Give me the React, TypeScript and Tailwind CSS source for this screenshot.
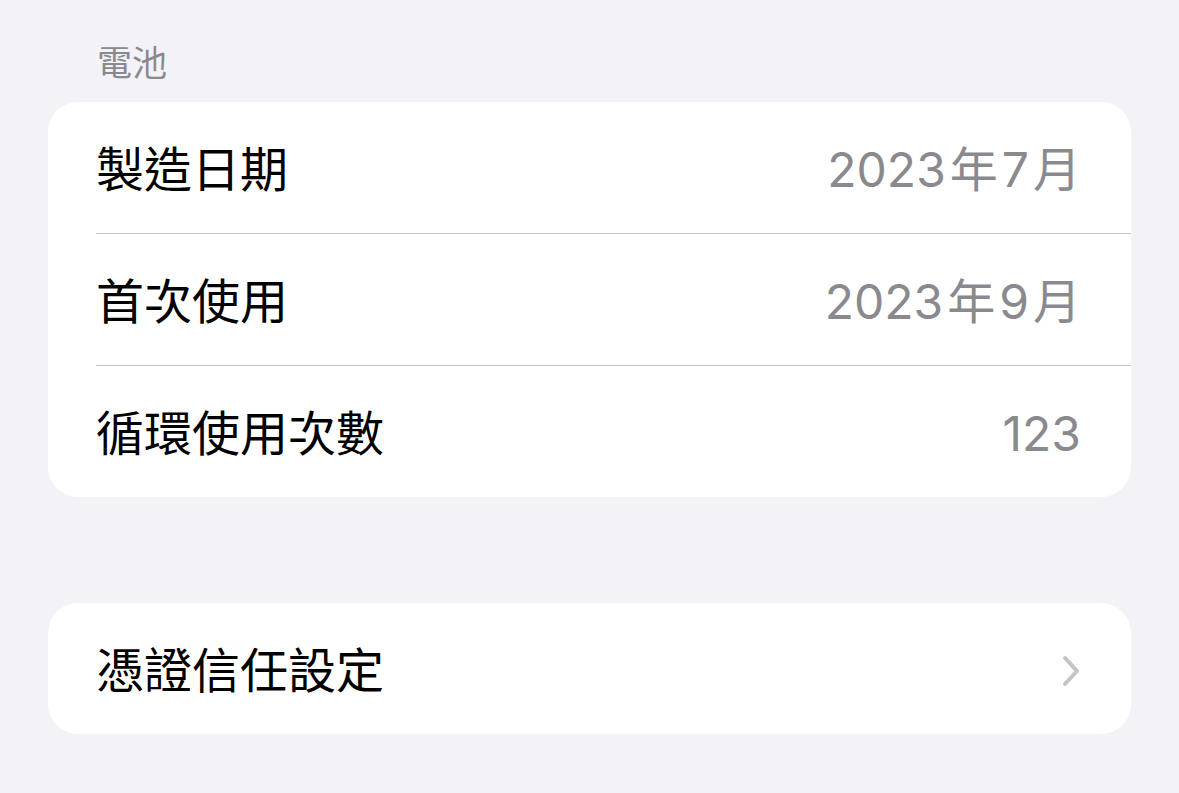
import React from "react";

const font = "font-['Inter','Noto_Sans_CJK_TC',sans-serif]";

function Chevron() {
  return (
    <svg width="20" height="34" viewBox="0 0 20 34" fill="none">
      <path d="M4 4 L16 17 L4 30" stroke="#c4c4c7" strokeWidth="4" strokeLinecap="round" strokeLinejoin="round" />
    </svg>
  );
}

function Value({ parts }: { parts: string[] }) {
  return (
    <span className="flex items-center text-[#8a8a8e]">
      {parts.map((p, i) => (
        <span key={i} className={i > 0 ? "ml-[4px]" : ""}>
          {p}
        </span>
      ))}
    </span>
  );
}

function Row({ label, children, last }: { label: string; children?: React.ReactNode; last?: boolean }) {
  return (
    <div className="pl-[48px]">
      <div
        className={`flex items-center justify-between pr-[50px] pt-[4px] ${
          last ? "h-[131px]" : "h-[132px] border-b border-[#c6c6c8]"
        }`}
      >
        <span className="text-black">{label}</span>
        {children}
      </div>
    </div>
  );
}

export default function App() {
  return (
    <div className={`min-h-[793px] w-[1179px] bg-[#f2f2f7] ${font}`}>
      <div className="px-[48px] pt-[42px]">
        <div className="pl-[49px] text-[35px] leading-[42px] text-[#8a8a8e]">電池</div>
        <div className="mt-[18px] overflow-hidden rounded-[30px] bg-white text-[48px]">
          <Row label="製造日期">
            <Value parts={["2023", "年", "7", "月"]} />
          </Row>
          <Row label="首次使用">
            <Value parts={["2023", "年", "9", "月"]} />
          </Row>
          <Row label="循環使用次數" last>
            <span className="text-[#8a8a8e]">123</span>
          </Row>
        </div>
        <div className="mt-[106px] overflow-hidden rounded-[30px] bg-white text-[48px]">
          <div className="flex h-[131px] items-center justify-between pl-[48px] pr-[50px] pt-[4px]">
            <span className="text-black">憑證信任設定</span>
            <Chevron />
          </div>
        </div>
      </div>
    </div>
  );
}
